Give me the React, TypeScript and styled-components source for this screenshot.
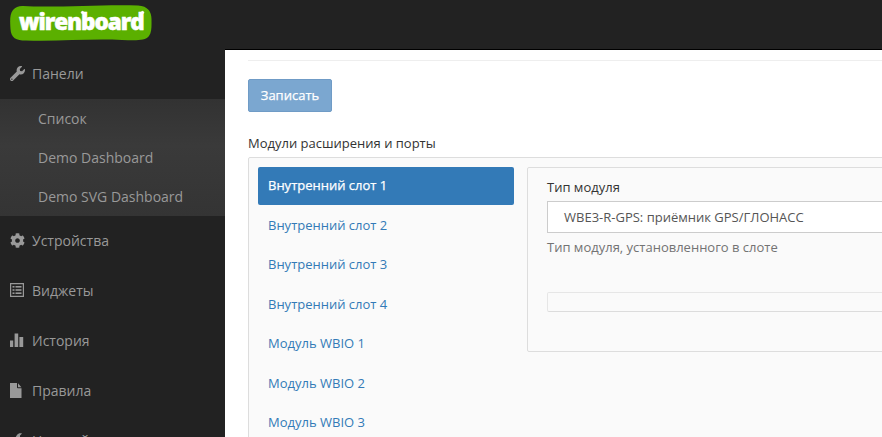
import React from "react";
import styled, { createGlobalStyle } from "styled-components";
import { FaWrench, FaCog } from "react-icons/fa";

const GlobalStyle = createGlobalStyle`
  html, body {
    margin: 0;
    padding: 0;
    height: 100%;
    overflow: hidden;
    background: #222;
  }
  * {
    box-sizing: border-box;
  }
`;

const Page = styled.div`
  width: 882px;
  height: 437px;
  display: flex;
  flex-direction: column;
  overflow: hidden;
  font-family: "Open Sans", sans-serif;
  font-size: 13px;
  color: #333;
`;

const TopBar = styled.header`
  height: 49px;
  flex: none;
  background: #222;
  padding: 5px 0 0 10px;
`;

const Logo = styled.div`
  position: relative;
  width: 142px;
  height: 36px;
  color: #fff;
  font-weight: 800;
  font-size: 22.5px;
  line-height: 34px;
  letter-spacing: -1.05px;
  -webkit-text-stroke: 0.55px #fff;
  padding-left: 9px;
  white-space: nowrap;

  svg {
    position: absolute;
    left: 0;
    top: 0;
  }

  span {
    position: relative;
  }
`;

const Body = styled.div`
  flex: 1;
  display: flex;
  min-height: 0;
`;

const Sidebar = styled.nav`
  width: 225px;
  flex: none;
  background: #222;
`;

const NavItem = styled.div`
  height: 50px;
  display: flex;
  align-items: center;
  padding: 0 0 2px 10px;
  color: #999;
  font-size: 14px;
`;

const NavIcon = styled.span`
  width: 22px;
  flex: none;
  display: flex;
  align-items: center;
  color: #999;
  font-size: 15px;
`;

const SubMenu = styled.div`
  background: linear-gradient(#323232, #3a3a3a 40%, #343434);
`;

const SubItem = styled.div`
  height: 39px;
  display: flex;
  align-items: center;
  padding-left: 38px;
  color: #999;
  font-size: 14px;
`;

const Content = styled.main`
  flex: 1;
  min-width: 0;
  background: #fff;
  border-top: 1px solid #000;
  padding: 10px 0 0 23px;
`;

const Rule = styled.hr`
  margin: 0 0 18px;
  border: 0;
  border-top: 1px solid #eee;
`;

const SaveButton = styled.button`
  display: block;
  width: 84px;
  height: 33px;
  background: #7ba7d0;
  border: 1px solid #6f9bc6;
  border-radius: 2px;
  color: #fff;
  font-family: inherit;
  font-size: 13px;
  font-weight: 400;
  -webkit-text-stroke: 0.25px #fff;
  padding: 0 0 2px;
`;

const SectionLabel = styled.div`
  margin-top: 21px;
  height: 24px;
  line-height: 20px;
  font-size: 13px;
`;

const Well = styled.div`
  display: flex;
  align-items: flex-start;
  gap: 13px;
  width: 700px;
  height: 320px;
  padding: 9px;
  background: #fafafa;
  border: 1px solid #ddd;
  border-radius: 2px;
`;

const Tabs = styled.div`
  width: 256px;
  flex: none;
  display: flex;
  flex-direction: column;
  gap: 1.5px;
`;

const Tab = styled.div<{ $active?: boolean }>`
  height: 38px;
  display: flex;
  align-items: center;
  padding: 0 0 2px 10px;
  border-radius: 2px;
  font-size: 13px;
  color: ${(p) => (p.$active ? "#fff" : "#337ab7")};
  background: ${(p) => (p.$active ? "#337ab7" : "transparent")};
  -webkit-text-stroke: ${(p) => (p.$active ? "0.25px #fff" : "0")};
`;

const TabPanel = styled.div`
  flex: 1;
  height: 185px;
  padding: 9px 19px;
  border: 1px solid #ddd;
  border-radius: 2px;
  background: #fafafa;
`;

const FieldLabel = styled.div`
  height: 24px;
  line-height: 20px;
  font-size: 13px;
`;

const SelectBox = styled.div`
  height: 32px;
  display: flex;
  align-items: center;
  padding-left: 16px;
  background: #fff;
  border: 1px solid #ccc;
  color: #555;
  font-size: 13px;
`;

const HelpText = styled.div`
  margin-top: 4px;
  line-height: 20px;
  color: #737373;
  font-size: 13px;
`;

const EmptyBar = styled.div`
  margin-top: 35px;
  height: 20px;
  background: #fafafa;
  border: 1px solid #e6e6e6;
  border-bottom-color: #dcdcdc;
  border-radius: 2px;
`;

const LogoShape = () => (
  <svg width="142" height="36" viewBox="0 0 142 36">
    <path
      fill="#5bb000"
      d="M13 1 C45 3 95 -1 128 0.5 C138 1 141.5 7 141.5 14 C141.5 20 142 27 139 31 C135 36 126 35.5 112 35 C80 33.5 50 36.5 16 35.5 C6 35.5 1 33 0.5 24 C0 17 -0.5 9 3 5 C5.5 2 9 0.8 13 1 Z"
    />
    <g fill="#fff" stroke="#5bb000" strokeWidth="0.5">
      <circle cx="72.5" cy="7.5" r="1.8" />
      <circle cx="132.5" cy="7.5" r="1.8" />
    </g>
  </svg>
);

const ListIcon = () => (
  <svg width="14" height="14" viewBox="0 0 14 14" fill="currentColor">
    <path fillRule="evenodd" d="M0 0H14V14H0ZM1.2 1.2V12.8H12.8V1.2Z" />
    <rect x="2.5" y="3" width="2" height="1.6" />
    <rect x="5.5" y="3" width="6" height="1.6" />
    <rect x="2.5" y="6.2" width="2" height="1.6" />
    <rect x="5.5" y="6.2" width="6" height="1.6" />
    <rect x="2.5" y="9.4" width="2" height="1.6" />
    <rect x="5.5" y="9.4" width="6" height="1.6" />
  </svg>
);

const ChartIcon = () => (
  <svg width="14" height="14" viewBox="0 0 14 14" fill="currentColor">
    <rect x="0" y="7.5" width="3.2" height="6.5" />
    <rect x="4.6" y="0.5" width="3.6" height="13.5" />
    <rect x="9.4" y="4" width="3.8" height="10" />
  </svg>
);

const FileIcon = () => (
  <svg width="12" height="15" viewBox="0 0 12 15" fill="currentColor">
    <path d="M0 0H7V4.5C7 5 7.3 5.3 7.8 5.3H11.5V15H0Z" />
    <path d="M8 0.3L11.4 4.2H8Z" />
  </svg>
);

const SettingsIcon = () => (
  <svg width="14" height="14" viewBox="0 0 14 14" fill="currentColor">
    <path d="M7 2C8 0.4 10 -0.2 12 0.4L10 2.5L10 5L7 7.5L5.5 5.5C5.5 4.2 6.2 3 7 2Z" />
  </svg>
);

const navAfter = [
  { label: "Устройства", icon: <FaCog /> },
  { label: "Виджеты", icon: <ListIcon /> },
  { label: "История", icon: <ChartIcon /> },
  { label: "Правила", icon: <FileIcon /> },
  { label: "Настройки", icon: <SettingsIcon /> },
];

const subItems = ["Список", "Demo Dashboard", "Demo SVG Dashboard"];

const tabs = [
  "Внутренний слот 1",
  "Внутренний слот 2",
  "Внутренний слот 3",
  "Внутренний слот 4",
  "Модуль WBIO 1",
  "Модуль WBIO 2",
  "Модуль WBIO 3",
];

export default function App() {
  return (
    <Page>
      <GlobalStyle />
      <TopBar>
        <Logo>
          <LogoShape />
          <span>wirenboard</span>
        </Logo>
      </TopBar>
      <Body>
        <Sidebar>
          <NavItem>
            <NavIcon>
              <FaWrench />
            </NavIcon>
            Панели
          </NavItem>
          <SubMenu>
            {subItems.map((item) => (
              <SubItem key={item}>{item}</SubItem>
            ))}
          </SubMenu>
          {navAfter.map((item) => (
            <NavItem key={item.label}>
              <NavIcon>{item.icon}</NavIcon>
              {item.label}
            </NavItem>
          ))}
        </Sidebar>
        <Content>
          <Rule />
          <SaveButton>Записать</SaveButton>
          <SectionLabel>Модули расширения и порты</SectionLabel>
          <Well>
            <Tabs>
              {tabs.map((tab, index) => (
                <Tab key={tab} $active={index === 0}>
                  {tab}
                </Tab>
              ))}
            </Tabs>
            <TabPanel>
              <FieldLabel>Тип модуля</FieldLabel>
              <SelectBox>WBE3-R-GPS: приёмник GPS/ГЛОНАСС</SelectBox>
              <HelpText>Тип модуля, установленного в слоте</HelpText>
              <EmptyBar />
            </TabPanel>
          </Well>
        </Content>
      </Body>
    </Page>
  );
}
